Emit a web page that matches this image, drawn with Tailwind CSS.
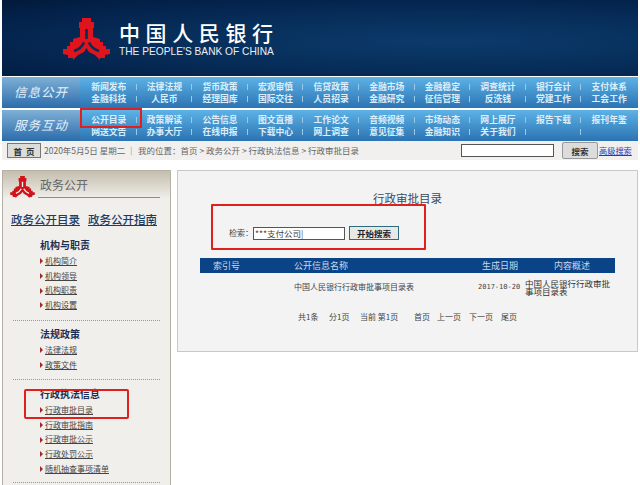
<!DOCTYPE html>
<html lang="zh">
<head>
<meta charset="utf-8">
<script src="https://cdn.jsdelivr.net/npm/@tailwindcss/browser@4"></script>
</head>
<body class="bg-white font-['Noto_Sans_CJK_SC','Liberation_Sans',sans-serif]">
<div class="relative w-[640px] h-[485px] overflow-hidden px-[2px]">
  <!-- banner -->
  <header class="h-[76px] flex items-start pl-[61px] pt-[18px] gap-[9px] bg-[radial-gradient(ellipse_at_70%_55%,#0b3a6b_0%,#072e5a_45%,#03214a_80%,#021a3a_100%)]">
    <svg width="47" height="42" viewBox="0 0 47 42" class="shrink-0">
      <path fill="#e0141c" d="M19 0H28V4H31V10H30V19L37 21V24H40V28H43V31H47V36L42 37V40H37V42L32 37L26 34L23.5 30L21 34L15 37L10 42V40H5V37L0 36V31H4V28H7V24H10V21L17 19V10H16V4H19Z"/>
      <path fill="none" stroke="#072c58" stroke-width="2.6" d="M23.5 11V21M11 33Q18 31 21 24.5M36 33Q29 31 26 24.5"/>
    </svg>
    <div class="text-white">
      <div class="text-[21px] leading-[28px] font-medium tracking-[5.6px] whitespace-nowrap font-['Noto_Sans_CJK_SC',sans-serif]">中国人民银行</div>
      <div class="text-[10.2px] leading-[14px] font-['Liberation_Sans',sans-serif] text-[#e8eef5] whitespace-nowrap -mt-[1px]">THE PEOPLE'S BANK OF CHINA</div>
    </div>
  </header>

  <!-- nav rows -->
  <nav class="flex flex-col gap-[2px] pt-[1px] text-[#dceef9] font-bold text-[8.8px] leading-[12px]">
    <div class="flex h-[31px] bg-gradient-to-b from-[#5db2e6] to-[#2c73b3]">
      <div class="w-[78px] shrink-0 flex items-center justify-center pb-[2px] italic font-normal text-[12.5px] tracking-[1px] text-[#e6f2fa] bg-gradient-to-b from-[#7fb0d6] to-[#2a6cab]">信息公开</div>
      <div class="grid grid-cols-[repeat(10,55.6px)] items-center pl-[1px]">
        <div class="text-center h-[24px] bg-[linear-gradient(#9cc8e8_50%,transparent_50%)] bg-[length:1px_12px] bg-repeat-y bg-[position:100%_3px]">新闻发布<br>金融科技</div>
        <div class="text-center h-[24px] bg-[linear-gradient(#9cc8e8_50%,transparent_50%)] bg-[length:1px_12px] bg-repeat-y bg-[position:100%_3px]">法律法规<br>人民币</div>
        <div class="text-center h-[24px] bg-[linear-gradient(#9cc8e8_50%,transparent_50%)] bg-[length:1px_12px] bg-repeat-y bg-[position:100%_3px]">货币政策<br>经理国库</div>
        <div class="text-center h-[24px] bg-[linear-gradient(#9cc8e8_50%,transparent_50%)] bg-[length:1px_12px] bg-repeat-y bg-[position:100%_3px]">宏观审慎<br>国际交往</div>
        <div class="text-center h-[24px] bg-[linear-gradient(#9cc8e8_50%,transparent_50%)] bg-[length:1px_12px] bg-repeat-y bg-[position:100%_3px]">信贷政策<br>人员招录</div>
        <div class="text-center h-[24px] bg-[linear-gradient(#9cc8e8_50%,transparent_50%)] bg-[length:1px_12px] bg-repeat-y bg-[position:100%_3px]">金融市场<br>金融研究</div>
        <div class="text-center h-[24px] bg-[linear-gradient(#9cc8e8_50%,transparent_50%)] bg-[length:1px_12px] bg-repeat-y bg-[position:100%_3px]">金融稳定<br>征信管理</div>
        <div class="text-center h-[24px] bg-[linear-gradient(#9cc8e8_50%,transparent_50%)] bg-[length:1px_12px] bg-repeat-y bg-[position:100%_3px]">调查统计<br>反洗钱</div>
        <div class="text-center h-[24px] bg-[linear-gradient(#9cc8e8_50%,transparent_50%)] bg-[length:1px_12px] bg-repeat-y bg-[position:100%_3px]">银行会计<br>党建工作</div>
        <div class="text-center h-[24px]">支付体系<br>工会工作</div>
      </div>
    </div>
    <div class="flex h-[31px] bg-gradient-to-b from-[#5db2e6] to-[#2c73b3]">
      <div class="w-[78px] shrink-0 flex items-center justify-center pb-[2px] italic font-normal text-[12.5px] tracking-[1px] text-[#e6f2fa] bg-gradient-to-b from-[#7fb0d6] to-[#2a6cab]">服务互动</div>
      <div class="grid grid-cols-[repeat(10,55.6px)] items-center pl-[1px]">
        <div class="text-center h-[24px] bg-[linear-gradient(#9cc8e8_50%,transparent_50%)] bg-[length:1px_12px] bg-repeat-y bg-[position:100%_3px]">公开目录<br>网送文告</div>
        <div class="text-center h-[24px] bg-[linear-gradient(#9cc8e8_50%,transparent_50%)] bg-[length:1px_12px] bg-repeat-y bg-[position:100%_3px]">政策解读<br>办事大厅</div>
        <div class="text-center h-[24px] bg-[linear-gradient(#9cc8e8_50%,transparent_50%)] bg-[length:1px_12px] bg-repeat-y bg-[position:100%_3px]">公告信息<br>在线申报</div>
        <div class="text-center h-[24px] bg-[linear-gradient(#9cc8e8_50%,transparent_50%)] bg-[length:1px_12px] bg-repeat-y bg-[position:100%_3px]">图文直播<br>下载中心</div>
        <div class="text-center h-[24px] bg-[linear-gradient(#9cc8e8_50%,transparent_50%)] bg-[length:1px_12px] bg-repeat-y bg-[position:100%_3px]">工作论文<br>网上调查</div>
        <div class="text-center h-[24px] bg-[linear-gradient(#9cc8e8_50%,transparent_50%)] bg-[length:1px_12px] bg-repeat-y bg-[position:100%_3px]">音频视频<br>意见征集</div>
        <div class="text-center h-[24px] bg-[linear-gradient(#9cc8e8_50%,transparent_50%)] bg-[length:1px_12px] bg-repeat-y bg-[position:100%_3px]">市场动态<br>金融知识</div>
        <div class="text-center h-[24px] bg-[linear-gradient(#9cc8e8_50%,transparent_50%)] bg-[length:1px_12px] bg-repeat-y bg-[position:100%_3px]">网上展厅<br>关于我们</div>
        <div class="text-center h-[24px] bg-[linear-gradient(#9cc8e8_50%,transparent_50%)] bg-[length:1px_12px] bg-repeat-y bg-[position:100%_3px]">报告下载</div>
        <div class="text-center h-[24px]">报刊年鉴</div>
      </div>
    </div>
  </nav>

  <!-- breadcrumb -->
  <div class="h-[19px] flex items-center bg-[#f1f0ee] text-[8.5px] text-[#666] whitespace-nowrap pl-[5px]">
    <button class="w-[34px] h-[15px] border border-[#777] bg-[#dcdcd8] text-[#333] font-bold text-[8.5px] leading-[12px]">首&nbsp;&nbsp;页</button>
    <span class="ml-[3px] w-[94px]">2020年5月5日 星期二 ｜</span>
    <span class="w-[323px]">我的位置：首页 &gt; 政务公开 &gt; 行政执法信息 &gt; 行政审批目录</span>
    <div class="w-[93px] h-[13px] border border-[#555] bg-white"></div>
    <button class="ml-[8px] w-[36px] h-[17px] border border-[#999] rounded-[2px] bg-[#dcdcdc] text-[#333] font-bold text-[8.5px] leading-[12px]">搜索</button>
    <a class="ml-[1px] text-[8.2px] text-[#1a3fb8] underline">高级搜索</a>
  </div>

  <!-- body -->
  <div class="flex gap-[6px] pt-[10px] items-start">
    <aside class="w-[169px] h-[320px] shrink-0 border border-[#b5b2a5] bg-[#f1efec] text-[8px] text-[#444]">
      <div class="h-[28px] pl-[7px] pt-[5px] flex items-start gap-[3px] bg-gradient-to-b from-[#c4bead] to-[#f1efec]">
        <svg width="25" height="22" viewBox="0 0 47 42" class="shrink-0">
          <path fill="#d0131b" d="M19 0H28V4H31V10H30V19L37 21V24H40V28H43V31H47V36L42 37V40H37V42L32 37L26 34L23.5 30L21 34L15 37L10 42V40H5V37L0 36V31H4V28H7V24H10V21L17 19V10H16V4H19Z"/>
          <path fill="none" stroke="#f1efec" stroke-width="2.6" d="M23.5 11V21M11 33Q18 31 21 24.5M36 33Q29 31 26 24.5"/>
        </svg>
        <div class="w-[122px] h-[22px] border-b border-[#8f8c80] text-[12px] leading-[18px] text-[#666] pl-[2px]">政务公开</div>
      </div>
      <div class="flex gap-[8px] pl-[8px] mt-[12px] text-[11.5px] leading-[16px] text-[#1c3d66] underline font-medium whitespace-nowrap">
        <a>政务公开目录</a><a>政务公开指南</a>
      </div>
      <section class="pl-[27px] mx-[10px] mt-[10px] h-[84px] leading-[14.7px] border-b border-dotted border-[#999]">
        <h3 class="text-[10px] leading-[16px] font-bold text-[#1c2f52] mb-[1px]">机构与职责</h3>
        <ul class="flex flex-col">
          <li class="flex items-center gap-[2px]"><i class="border-y-[3px] border-l-[3px] border-y-transparent border-l-[#a02828]"></i><a class="underline">机构简介</a></li>
          <li class="flex items-center gap-[2px]"><i class="border-y-[3px] border-l-[3px] border-y-transparent border-l-[#a02828]"></i><a class="underline">机构领导</a></li>
          <li class="flex items-center gap-[2px]"><i class="border-y-[3px] border-l-[3px] border-y-transparent border-l-[#a02828]"></i><a class="underline">机构职责</a></li>
          <li class="flex items-center gap-[2px]"><i class="border-y-[3px] border-l-[3px] border-y-transparent border-l-[#a02828]"></i><a class="underline">机构设置</a></li>
        </ul>
      </section>
      <section class="pl-[27px] mx-[10px] pt-[5px] h-[59px] leading-[14.7px] border-b border-dotted border-[#999]">
        <h3 class="text-[10px] leading-[16px] font-bold text-[#1c2f52] mb-[1px]">法规政策</h3>
        <ul class="flex flex-col">
          <li class="flex items-center gap-[2px]"><i class="border-y-[3px] border-l-[3px] border-y-transparent border-l-[#a02828]"></i><a class="underline">法律法规</a></li>
          <li class="flex items-center gap-[2px]"><i class="border-y-[3px] border-l-[3px] border-y-transparent border-l-[#a02828]"></i><a class="underline">政策文件</a></li>
        </ul>
      </section>
      <section class="pl-[27px] mx-[10px] pt-[6px] h-[103px] leading-[14.7px] border-b border-dotted border-[#999]">
        <h3 class="text-[10px] leading-[16px] font-bold text-[#1c2f52] mb-[1px]">行政执法信息</h3>
        <ul class="flex flex-col">
          <li class="flex items-center gap-[2px]"><i class="border-y-[3px] border-l-[3px] border-y-transparent border-l-[#a02828]"></i><a class="underline">行政审批目录</a></li>
          <li class="flex items-center gap-[2px]"><i class="border-y-[3px] border-l-[3px] border-y-transparent border-l-[#a02828]"></i><a class="underline">行政审批指南</a></li>
          <li class="flex items-center gap-[2px]"><i class="border-y-[3px] border-l-[3px] border-y-transparent border-l-[#a02828]"></i><a class="underline">行政审批公示</a></li>
          <li class="flex items-center gap-[2px]"><i class="border-y-[3px] border-l-[3px] border-y-transparent border-l-[#a02828]"></i><a class="underline">行政处罚公示</a></li>
          <li class="flex items-center gap-[2px]"><i class="border-y-[3px] border-l-[3px] border-y-transparent border-l-[#a02828]"></i><a class="underline">随机抽查事项清单</a></li>
        </ul>
      </section>
    </aside>

    <main class="w-[461px] h-[182px] border border-[#c8c8c8] bg-[#f3f3f4] text-[8px] text-[#444] px-[22px]">
      <h1 class="text-center text-[11.5px] leading-[16px] text-[#3c4a5c] pt-[19px] box-content">行政审批目录</h1>
      <div class="flex items-center h-[16px] mt-[19px] pl-[29px]">
        <span class="w-[24px] whitespace-nowrap">检索：</span>
        <div class="w-[92px] h-[13px] border border-[#555] bg-white text-[8.5px] leading-[11px] pl-[1px] whitespace-nowrap">***支付公司|</div>
        <button class="ml-[4px] w-[50px] h-[14px] border border-[#2f6b80] bg-[#e8e8e4] text-[#222] font-bold text-[8.5px] leading-[10px]">开始搜索</button>
      </div>
      <div class="grid grid-cols-[94px_188px_43px_90px] items-center h-[15px] mt-[17px] bg-[#0a4487] text-[#c9d8ea] text-[9px]">
        <span class="pl-[13px]">索引号</span><span>公开信息名称</span><span class="whitespace-nowrap">生成日期</span><span class="pl-[29px] whitespace-nowrap">内容概述</span>
      </div>
      <div class="grid grid-cols-[94px_184px_47px_90px] items-center h-[28px]">
        <span></span><span class="whitespace-nowrap">中国人民银行行政审批事项目录表</span><span class="whitespace-nowrap font-['DejaVu_Sans_Mono',monospace] text-[7px]">2017-10-20</span><span class="leading-[8px] text-[8.5px] text-[#333]">中国人民银行行政审批事项目录表</span>
      </div>
      <div class="flex mt-[10px] pl-[98px] h-[12px] leading-[12px] whitespace-nowrap">
        <span class="w-[31px]">共1条</span><span class="w-[31px]">分1页</span><span class="w-[54px]">当前 第1页</span><span class="w-[23px]">首页</span><span class="w-[32px]">上一页</span><span class="w-[32px]">下一页</span><span>尾页</span>
      </div>
    </main>
  </div>

  <!-- red annotation boxes -->
  <div class="absolute left-[80px] top-[108px] w-[62px] h-[20px] border-2 border-[#e0201c]"></div>
  <div class="absolute left-[211px] top-[204px] w-[215px] h-[46px] border-2 border-[#e0201c] rounded-[1px]"></div>
  <div class="absolute left-[24px] top-[389px] w-[105px] h-[30px] border-2 border-[#e0201c] rounded-[2px]"></div>
</div>
</body>
</html>
